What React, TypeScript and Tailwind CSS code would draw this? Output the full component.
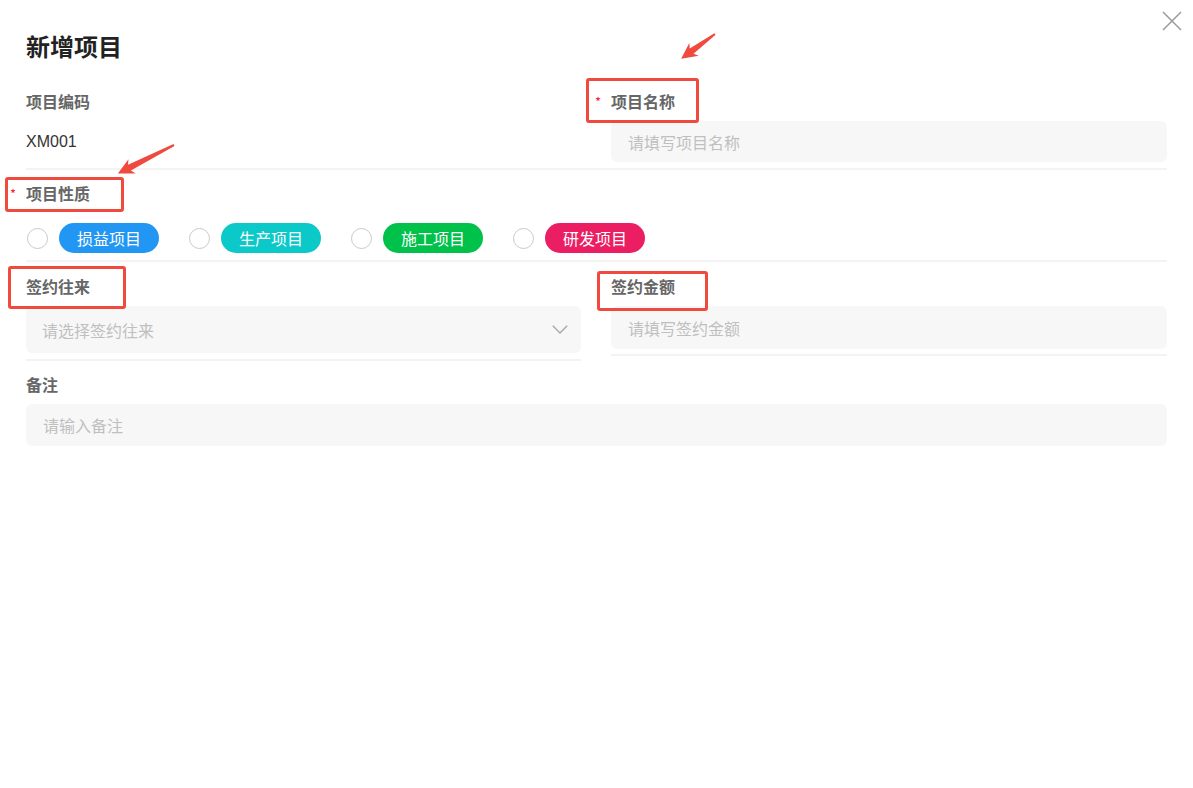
const FONT = '"Noto Sans CJK SC", "Noto Sans", sans-serif'
const LATIN = '"Liberation Sans", "Noto Sans CJK SC", sans-serif'

const natures = [
  { label: '损益项目', color: 'bg-[#2196f3]' },
  { label: '生产项目', color: 'bg-[#0bc9c9]' },
  { label: '施工项目', color: 'bg-[#00c14a]' },
  { label: '研发项目', color: 'bg-[#eb1e63]' },
]

function Label({ text, required }: { text: string; required?: boolean }) {
  return (
    <div className="relative h-[22px] text-[16px] leading-[22px] font-bold text-[#666]">
      {required && (
        <span className="absolute -left-[16px] top-[1px] text-[13px] text-[#f5222d] font-normal">*</span>
      )}
      {text}
    </div>
  )
}

function Divider() {
  return <div className="h-[2px] bg-[#f3f3f3]" />
}

function Input({ placeholder, h }: { placeholder: string; h: string }) {
  return (
    <div className={`${h} flex items-center rounded-md bg-[#f7f7f7] pl-[17px] text-[16px] text-[#bfbfbf]`}>
      {placeholder}
    </div>
  )
}

// annotation arrow: tail at (x, y), pointing at angle (deg), length len
function Arrow({ x, y, angle, len }: { x: number; y: number; angle: number; len: number }) {
  const pts = `0,-1 ${len - 13},-3.2 ${len - 16},-8 ${len},0 ${len - 16},8 ${len - 13},3.2 0,1`
  return <polygon points={pts} fill="#ef4a3d" transform={`translate(${x} ${y}) rotate(${angle})`} />
}

export default function App() {
  return (
    <div className="relative min-h-screen bg-white" style={{ fontFamily: FONT }}>
      <div className="px-[26px] pt-[30px]">
        <h1 className="text-[24px] leading-[32px] font-bold text-[#222]">新增项目</h1>

        {/* row 1 */}
        <div className="mt-[28px] grid grid-cols-[555px_1fr] gap-x-[30px]">
          <div>
            <Label text="项目编码" />
            <div className="mt-[9px] h-[41px] flex items-center text-[16px] text-[#333]" style={{ fontFamily: LATIN }}>
              XM001
            </div>
          </div>
          <div>
            <Label text="项目名称" required />
            <div className="mt-[9px]">
              <Input placeholder="请填写项目名称" h="h-[41px]" />
            </div>
          </div>
        </div>
        <div className="mt-[6px]">
          <Divider />
        </div>

        {/* row 2 */}
        <div className="mt-[12px]">
          <Label text="项目性质" required />
          <div className="mt-[19px] flex items-center gap-[30px] pl-[1px]">
            {natures.map((n) => (
              <div key={n.label} className="flex items-center gap-[11px]">
                <span className="h-[21px] w-[21px] rounded-full border-[1.5px] border-[#c9c9c9]" />
                <span className={`${n.color} h-[30px] w-[100px] rounded-full flex items-center justify-center text-[16px] text-white`}>
                  {n.label}
                </span>
              </div>
            ))}
          </div>
          <div className="mt-[7px]">
            <Divider />
          </div>
        </div>

        {/* row 3 */}
        <div className="mt-[13px] grid grid-cols-[555px_1fr] gap-x-[30px] items-start">
          <div>
            <Label text="签约往来" />
            <div className="mt-[9px] h-[47px] flex items-center justify-between rounded-md bg-[#f7f7f7] pl-[16px] pr-[13px] text-[16px] text-[#bfbfbf]">
              请选择签约往来
              <svg viewBox="0 0 16 9" className="h-[9px] w-[16px]">
                <path d="M0.8 0.8 L8 8 L15.2 0.8" stroke="#a8a8a8" strokeWidth="1.4" fill="none" />
              </svg>
            </div>
            <div className="mt-[6px]">
              <Divider />
            </div>
          </div>
          <div>
            <Label text="签约金额" />
            <div className="mt-[9px]">
              <Input placeholder="请填写签约金额" h="h-[43px]" />
            </div>
            <div className="mt-[5px]">
              <Divider />
            </div>
          </div>
        </div>

        {/* row 4 */}
        <div className="mt-[12px]">
          <Label text="备注" />
          <div className="mt-[9px]">
            <Input placeholder="请输入备注" h="h-[42px]" />
          </div>
        </div>
      </div>

      {/* close */}
      <button className="absolute left-[1162px] top-[11px] h-[20px] w-[20px]">
        <svg viewBox="0 0 20 20" className="h-[20px] w-[20px]">
          <path d="M1 1 L19 19 M19 1 L1 19" stroke="#9a9a9a" strokeWidth="1.5" fill="none" />
        </svg>
      </button>

      {/* annotations */}
      <div className="pointer-events-none absolute left-[586px] top-[78px] h-[45px] w-[113px] rounded-[3px] border-[3px] border-[#ef4a3d]" />
      <div className="pointer-events-none absolute left-[5px] top-[177px] h-[35px] w-[119px] rounded-[3px] border-[3px] border-[#ef4a3d]" />
      <div className="pointer-events-none absolute left-[8px] top-[266px] h-[43px] w-[118px] rounded-[3px] border-[3px] border-[#ef4a3d]" />
      <div className="pointer-events-none absolute left-[597px] top-[271px] h-[40px] w-[111px] rounded-[3px] border-[3px] border-[#ef4a3d]" />
      <svg className="pointer-events-none absolute left-0 top-0" width="1193" height="788">
        <Arrow x={715} y={34} angle={143.7} len={42} />
        <Arrow x={174} y={145} angle={153} len={63} />
      </svg>
    </div>
  )
}
